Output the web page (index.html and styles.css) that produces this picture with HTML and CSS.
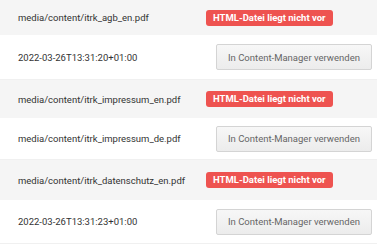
FILE: index.html
```html
<!DOCTYPE html>
<html lang="de">
<head>
    <meta charset="UTF-8">
    <meta name="viewport" content="width=device-width, initial-scale=1.0">
    <title>Dateien</title>
    <link rel="stylesheet" href="styles.css">
</head>
<body>
    <div class="file-list">
        <!-- itrk_agb -->
        <div class="row row-head first">
            <span class="path">media/content/itrk_agb_en.pdf</span>
            <span class="badge">HTML-Datei liegt nicht vor</span>
        </div>
        <div class="row row-sub first">
            <span class="path">2022-03-26T13:31:20+01:00</span>
            <button class="use-btn">In Content-Manager verwenden</button>
        </div>

        <!-- itrk_impressum -->
        <div class="row row-head second">
            <span class="path">media/content/itrk_impressum_en.pdf</span>
            <span class="badge">HTML-Datei liegt nicht vor</span>
        </div>
        <div class="row row-sub second">
            <span class="path">media/content/itrk_impressum_de.pdf</span>
            <button class="use-btn">In Content-Manager verwenden</button>
        </div>

        <!-- itrk_datenschutz -->
        <div class="row row-head third">
            <span class="path">media/content/itrk_datenschutz_en.pdf</span>
            <span class="badge">HTML-Datei liegt nicht vor</span>
        </div>
        <div class="row row-sub third">
            <span class="path">2022-03-26T13:31:23+01:00</span>
            <button class="use-btn">In Content-Manager verwenden</button>
        </div>
    </div>
</body>
</html>
```

FILE: styles.css
```css
* {
    margin: 0;
    padding: 0;
    box-sizing: border-box;
}

body {
    font-family: Roboto, "Liberation Sans", Arial, sans-serif;
    font-size: 9.5px;
    color: #333;
    background: #fff;
    overflow: hidden;
}

.file-list {
    display: flex;
    flex-direction: column;
}

.row {
    display: grid;
    grid-template-columns: 188px auto;
    align-items: center;
    padding-left: 18px;
    justify-items: start;
}

.row-head {
    background: #f5f5f5;
}

.row-sub {
    border-bottom: 1px solid #f0f0f0;
}

.row-head.first { height: 35px; }
.row-sub.first { height: 45px; }
.row-head.second { height: 38px; }
.row-sub.second { height: 42px; }
.row-head.third { height: 40px; }
.row-sub.third { height: 44px; }

.path {
    white-space: nowrap;
}

.badge {
    display: inline-block;
    padding: 3px 7px;
    font-size: 9.5px;
    font-weight: 700;
    line-height: 10px;
    color: #fff;
    background: #ee5350;
    border-radius: 3px;
    white-space: nowrap;
}

.use-btn {
    margin-left: 10px;
    height: 26px;
    padding: 0 11px;
    font-family: inherit;
    font-size: 9.5px;
    color: #666;
    background: linear-gradient(to bottom, #f7f7f7, #ececec);
    border: 1px solid #d4d4d4;
    border-radius: 2px;
    white-space: nowrap;
    cursor: pointer;
}
```
